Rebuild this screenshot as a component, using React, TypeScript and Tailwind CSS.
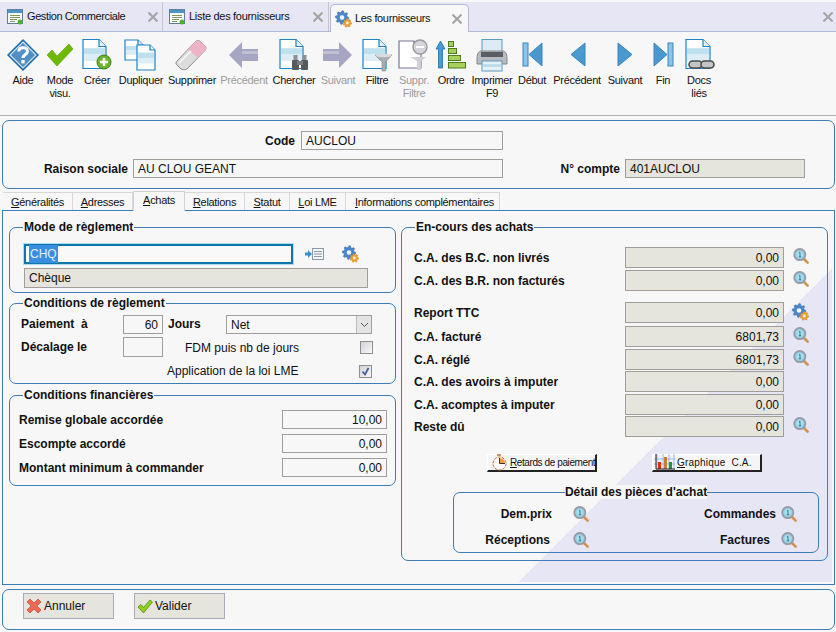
import React from "react";

function gearPath(cx: number, cy: number, r: number, teeth: number) {
  const pts: string[] = [];
  const n = teeth * 4;
  for (let i = 0; i < n; i++) {
    const a = (i / n) * Math.PI * 2;
    const rr = i % 4 < 2 ? r : r * 0.74;
    pts.push(`${(cx + rr * Math.cos(a)).toFixed(2)},${(cy + rr * Math.sin(a)).toFixed(2)}`);
  }
  return "M" + pts.join("L") + "Z";
}

function Gear({ className = "" }: { className?: string }) {
  return (
    <svg viewBox="0 0 17 18" width="17" height="18" className={className}>
      <path d={gearPath(7, 7.5, 6.8, 8)} fill="#4a88cc" stroke="#2f639c" strokeWidth="0.5" />
      <circle cx="7" cy="7.5" r="2.3" fill="#f4f8fc" />
      <path d={gearPath(12.3, 13, 4.4, 7)} fill="#f0a030" stroke="#b8701c" strokeWidth="0.4" />
      <circle cx="12.3" cy="13" r="1.4" fill="#fff2d8" />
    </svg>
  );
}

function Loupe({ className = "" }: { className?: string }) {
  return (
    <svg viewBox="0 0 16 16" width="16" height="16" className={className}>
      <path d="M10.5 10.5L12 12" stroke="#85858e" strokeWidth="2.4" />
      <path d="M12 12L14.6 14.6" stroke="#d8904a" strokeWidth="2.6" strokeLinecap="round" />
      <circle cx="6.8" cy="6.6" r="5.6" fill="#8ecfe6" stroke="#9a9aa4" strokeWidth="1.8" />
      <circle cx="6.8" cy="6.6" r="3.4" fill="#a9def0" />
      <path d="M6 5L7 4.4V8.8M5.8 8.8H8.2" stroke="#23606f" strokeWidth="0.8" fill="none" />
    </svg>
  );
}

function Doc({ x, y, w, h, stroke = "#1c83c6" }: { x: number; y: number; w: number; h: number; stroke?: string }) {
  const f = Math.round(w * 0.3);
  const band = y + h * 0.3;
  return (
    <g>
      <path d={`M${x} ${y}H${x + w - f}L${x + w} ${y + f}V${y + h}H${x}Z`} fill="#fff" stroke={stroke} strokeWidth="1.2" />
      <rect x={x + 1} y={band} width={w - 2} height={h * 0.22} fill="#bfe0ef" />
      <rect x={x + 1} y={band + h * 0.22} width={w - 2} height={h * 0.22} fill="#dcedf6" />
      <path d={`M${x + w - f} ${y}V${y + f}H${x + w}`} fill="#e8f3f9" stroke={stroke} strokeWidth="1.2" />
    </g>
  );
}

function ListDoc({ className = "" }: { className?: string }) {
  return (
    <svg viewBox="0 0 16 16" width="16" height="16" className={className}>
      <rect x="0.5" y="0.5" width="15" height="14" fill="#fff" stroke="#5b7f9c" />
      <rect x="1" y="1" width="14" height="3" fill="#4d94c8" />
      <path d="M3 6.5H13M3 8.5H13M3 10.5H10M3 12.5H8" stroke="#7d9a5c" />
      <circle cx="13" cy="13" r="2.5" fill="#4fae2c" />
    </svg>
  );
}

function CloseX({ className = "" }: { className?: string }) {
  return (
    <svg viewBox="0 0 10 10" width="10" height="10" className={`shrink-0 ${className}`}>
      <path d="M0.5 0.5L9.5 9.5M9.5 0.5L0.5 9.5" stroke="#a4a4a4" strokeWidth="2" />
    </svg>
  );
}

const IconBox = ({ children }: { children: React.ReactNode }) => (
  <svg viewBox="0 0 36 34" width="36" height="34" className="shrink-0">
    {children}
  </svg>
);

const icons: Record<string, React.ReactNode> = {
  aide: (
    <IconBox>
      <path d="M18 1L34 17L18 33L2 17Z" fill="#1d6aa6" />
      <path d="M18 4L31 17L18 30L5 17Z" fill="#4f8fc6" stroke="#d5e7f4" strokeWidth="1.2" />
      <path d="M13.8 13.5C14 8.5 22.5 8.5 22.5 13.2C22.5 16.5 18 16.5 18 20" fill="none" stroke="#fff" strokeWidth="3" />
      <rect x="16.3" y="22" width="3.4" height="3.4" fill="#fff" />
    </IconBox>
  ),
  check: (
    <IconBox>
      <path d="M5 17L10 12L15 18L27 6L31 11L15 28Z" fill="#6db800" stroke="#5b9c00" strokeWidth="0.6" />
    </IconBox>
  ),
  creer: (
    <IconBox>
      <Doc x={4} y={1.5} w={23} h={29} />
      <circle cx="25" cy="24" r="7" fill="#6fb52c" stroke="#3d7d1a" />
      <path d="M25 20V28M21 24H29" stroke="#fff" strokeWidth="2.4" />
    </IconBox>
  ),
  dup: (
    <IconBox>
      <Doc x={2} y={2} w={18} h={20} />
      <Doc x={14} y={7} w={18} h={25} />
    </IconBox>
  ),
  eraser: (
    <IconBox>
      <g transform="translate(-2 0)">
        <path d="M5 23L23 4C25 2 27 2 29 4L33 8C34.5 10 34 11 33 12.5L15 31C13 32 11 32 9 31L5 27C3.6 25.5 3.6 24.5 5 23Z" fill="#dcdcdc" stroke="#8f8f8f" />
        <path d="M16 11.5L23 4C25 2 27 2 29 4L33 8C34.5 10 34 11 33 12.5L26 20Z" fill="#eeb4c6" />
        <path d="M7 25L19 13" stroke="#fff" strokeWidth="1.2" />
      </g>
    </IconBox>
  ),
  left: (
    <IconBox>
      <path d="M3 17L16 4V11H32V23H16V30Z" fill="#a7a6c2" />
      <path d="M16 13H32V16H16Z" fill="#c0bfd4" />
    </IconBox>
  ),
  right: (
    <IconBox>
      <path d="M32 17L19 4V11H3V23H19V30Z" fill="#a7a6c2" />
      <path d="M3 13H19V16H3Z" fill="#c0bfd4" />
    </IconBox>
  ),
  chercher: (
    <IconBox>
      <Doc x={4} y={1.5} w={23} h={29} />
      <rect x="16" y="22" width="7" height="10" rx="1" fill="#55585c" />
      <rect x="25" y="22" width="7" height="10" rx="1" fill="#55585c" />
      <rect x="21" y="23" width="6" height="4" fill="#7a7d82" />
      <rect x="17.5" y="17" width="4" height="5" fill="#8b8e92" />
      <rect x="26.5" y="17" width="4" height="5" fill="#8b8e92" />
    </IconBox>
  ),
  filtre: (
    <IconBox>
      <Doc x={4} y={1.5} w={23} h={29} />
      <path d="M16 17H33L26.5 24V33H23V24Z" fill="#a9acb0" stroke="#84878b" strokeWidth="0.6" />
      <ellipse cx="24.5" cy="17.5" rx="8" ry="1.8" fill="#d9dbde" />
    </IconBox>
  ),
  sfiltre: (
    <IconBox>
      <Doc x={3} y={3} w={22} h={27} stroke="#78769a" />
      <rect x="4" y="11" width="20" height="13" fill="#fff" />
      <path d="M14 19H30L25 23V32H21V23Z" fill="#cfd0d4" />
      <circle cx="24" cy="9" r="7" fill="#d4d4dc" stroke="#98989c" strokeWidth="1.4" />
      <path d="M20 9H28" stroke="#fff" strokeWidth="2" />
    </IconBox>
  ),
  ordre: (
    <IconBox>
      <path d="M5.5 30V11H3L7.5 3L12 11H9.5V30Z" fill="#4a9ad4" stroke="#1e6ea8" strokeWidth="0.8" />
      <g fill="#a9cf5b" stroke="#4f7c22" strokeWidth="1">
        <rect x="15.5" y="3.5" width="5" height="5" />
        <rect x="15.5" y="10.5" width="8" height="5" />
        <rect x="15.5" y="17.5" width="12" height="5" />
        <rect x="15.5" y="24.5" width="17" height="5.5" />
      </g>
    </IconBox>
  ),
  print: (
    <IconBox>
      <rect x="8" y="1.5" width="20" height="12" fill="#dcebf4" stroke="#5d98bf" />
      <path d="M3 21C3 14 5 13 9 13H27C31 13 33 14 33 21V26H3Z" fill="#b8bcc0" stroke="#83878c" />
      <rect x="7" y="14" width="22" height="5" fill="#5a5e64" />
      <rect x="8" y="23" width="20" height="10" fill="#e6f1f7" stroke="#5d98bf" />
      <rect x="9" y="26" width="18" height="3" fill="#bddcec" />
    </IconBox>
  ),
  debut: (
    <IconBox>
      <rect x="9" y="5" width="5" height="23" fill="#8ac4e6" stroke="#3a86bf" />
      <path d="M28 5V28L15 16.5Z" fill="#4a98d0" stroke="#3a86bf" />
    </IconBox>
  ),
  prec: (
    <IconBox>
      <path d="M26 5V28L12 16.5Z" fill="#4a98d0" stroke="#3a86bf" />
    </IconBox>
  ),
  suiv: (
    <IconBox>
      <path d="M11 5V28L25 16.5Z" fill="#4a98d0" stroke="#3a86bf" />
    </IconBox>
  ),
  fin: (
    <IconBox>
      <path d="M9 5V28L22 16.5Z" fill="#4a98d0" stroke="#3a86bf" />
      <rect x="23" y="5" width="5" height="23" fill="#8ac4e6" stroke="#3a86bf" />
    </IconBox>
  ),
  docs: (
    <IconBox>
      <Doc x={5} y={1.5} w={24} h={29} />
      <g fill="#c4c4c4" stroke="#4e4e4e" strokeWidth="1.6">
        <rect x="8" y="23" width="13" height="7" rx="3.5" />
        <rect x="20" y="23" width="13" height="7" rx="3.5" />
      </g>
    </IconBox>
  ),
};

const tools: { w: string; icon: string; label: React.ReactNode; off?: boolean }[] = [
  { w: "w-[36px]", icon: "aide", label: "Aide" },
  { w: "w-[38px]", icon: "check", label: <>Mode<br />visu.</> },
  { w: "w-[36px]", icon: "creer", label: "Créer" },
  { w: "w-[52px]", icon: "dup", label: "Dupliquer" },
  { w: "w-[50px]", icon: "eraser", label: "Supprimer" },
  { w: "w-[54px]", icon: "left", label: "Précédent", off: true },
  { w: "w-[46px]", icon: "chercher", label: "Chercher" },
  { w: "w-[42px]", icon: "right", label: "Suivant", off: true },
  { w: "w-[36px]", icon: "filtre", label: "Filtre" },
  { w: "w-[38px]", icon: "sfiltre", label: <>Suppr.<br />Filtre</>, off: true },
  { w: "w-[36px]", icon: "ordre", label: "Ordre" },
  { w: "w-[46px]", icon: "print", label: <>Imprimer<br />F9</> },
  { w: "w-[34px]", icon: "debut", label: "Début" },
  { w: "w-[56px]", icon: "prec", label: "Précédent" },
  { w: "w-[40px]", icon: "suiv", label: "Suivant" },
  { w: "w-[36px]", icon: "fin", label: "Fin" },
  { w: "w-[36px]", icon: "docs", label: <>Docs<br />liés</> },
];

const fieldBase = "flex items-center border border-[#a19e99] text-[12px] text-[#111] shrink-0";
const grey = "bg-[#e6e5dd]";
const legendCls = "ml-[13px] px-[1px] h-[14px] leading-[14px] text-[12px] font-bold text-[#111]";
const fsCls = "border border-[#3c7db5] rounded-[7px] min-w-0";
const labelCls = "text-[12px] font-bold text-[#111] shrink-0";

const encours: { label: string; value: string; mt: string; icon?: "loupe" | "gear" }[] = [
  { label: "C.A. des B.C. non livrés", value: "0,00", mt: "mt-[13px]", icon: "loupe" },
  { label: "C.A. des B.R. non facturés", value: "0,00", mt: "mt-[2px]", icon: "loupe" },
  { label: "Report TTC", value: "0,00", mt: "mt-[11px]", icon: "gear" },
  { label: "C.A. facturé", value: "6801,73", mt: "mt-[3px]", icon: "loupe" },
  { label: "C.A. réglé", value: "6801,73", mt: "mt-[2px]", icon: "loupe" },
  { label: "C.A. des avoirs à imputer", value: "0,00", mt: "mt-[1px]" },
  { label: "C.A. acomptes à imputer", value: "0,00", mt: "mt-[2px]" },
  { label: "Reste dû", value: "0,00", mt: "mt-[1px]", icon: "loupe" },
];

const subTabs: { w: string; first: string; rest: string; active?: boolean }[] = [
  { w: "w-[70px]", first: "G", rest: "énéralités" },
  { w: "w-[60px]", first: "A", rest: "dresses" },
  { w: "w-[52px]", first: "A", rest: "chats", active: true },
  { w: "w-[60px]", first: "R", rest: "elations" },
  { w: "w-[45px]", first: "S", rest: "tatut" },
  { w: "w-[56px]", first: "L", rest: "oi LME" },
  { w: "w-[154px] pl-[4px]", first: "I", rest: "nformations complémentaires" },
];

function Check({ checked }: { checked?: boolean }) {
  return (
    <div className="w-[13px] h-[13px] border border-[#8e8f8f] bg-[linear-gradient(135deg,#d0d2d8,#f8f8f8)] flex items-center justify-center shrink-0">
      {checked && (
        <svg viewBox="0 0 11 11" width="11" height="11">
          <path d="M2.5 5.5L5 8.5L8.5 2" fill="none" stroke="#4a5f97" strokeWidth="1.8" />
        </svg>
      )}
    </div>
  );
}

export default function App() {
  return (
    <div className="w-[836px] h-[632px] overflow-hidden bg-[#f7f7f7] font-['Liberation_Sans',Arial,sans-serif] text-[#111]">
      {/* window tabs */}
      <div className="pt-[2px]">
        <div className="h-[30px] bg-[#e6e6f5] border-b border-[#b4b8d8] flex items-end pr-[3px]">
          <div className="w-[163px] h-[29px] flex items-center border-r border-[#c6c6d0] pl-[7px] shrink-0">
            <ListDoc />
            <span className="ml-[4px] text-[11px] tracking-[-0.4px]">Gestion Commerciale</span>
            <CloseX className="ml-auto mr-[4px]" />
          </div>
          <div className="w-[166px] h-[29px] flex items-center border-r border-[#c6c6d0] pl-[6px] shrink-0">
            <ListDoc />
            <span className="ml-[4px] text-[11px] tracking-[-0.3px]">Liste des fournisseurs</span>
            <CloseX className="ml-auto mr-[5px]" />
          </div>
          <div className="w-[139px] h-[28px] -mb-[1px] ml-[1px] flex items-center bg-[#f7f7f7] border border-b-0 border-[#b4b8d8] rounded-t-[5px] pl-[4px] shrink-0">
            <Gear />
            <span className="ml-[3px] text-[11px] tracking-[-0.35px]">Les fournisseurs</span>
            <CloseX className="ml-auto mr-[6px]" />
          </div>
          <CloseX className="ml-auto mb-[9px]" />
        </div>
      </div>

      {/* toolbar */}
      <div className="h-[84px] border-b border-[#b0b0b0] pl-[5px] pt-[6px] flex items-start">
        {tools.map((t, i) => (
          <div key={i} className={`${t.w} shrink-0 flex flex-col items-center`}>
            {icons[t.icon]}
            <div className={`mt-[2px] text-[11px] leading-[13px] text-center whitespace-nowrap tracking-[-0.3px] ${t.off ? "text-[#9b9b9b]" : "text-[#111]"}`}>
              {t.label}
            </div>
          </div>
        ))}
      </div>

      {/* header */}
      <div className="ml-[2px] mt-[4px] w-[833px] h-[69px] border border-[#3c7db5] rounded-[7px] pt-[10px]">
        <div className="flex items-center">
          <div className={`${labelCls} w-[292px] text-right`}>Code</div>
          <div className={`${fieldBase} ml-[6px] w-[202px] h-[19px] px-[4px]`}>AUCLOU</div>
        </div>
        <div className="flex items-center mt-[9px]">
          <div className={`${labelCls} w-[125px] text-right`}>Raison sociale</div>
          <div className={`${fieldBase} ml-[5px] w-[370px] h-[19px] px-[4px]`}>AU CLOU GEANT</div>
          <div className={`${labelCls} w-[117px] text-right`}>N° compte</div>
          <div className={`${fieldBase} ${grey} ml-[5px] w-[180px] h-[19px] px-[4px]`}>401AUCLOU</div>
        </div>
      </div>

      {/* sub tabs */}
      <div className="ml-[3px] mt-[1px] h-[20px] flex items-end">
        {subTabs.map((t, i) => (
          <div
            key={i}
            className={
              t.active
                ? `${t.w} h-[20px] -mb-[1px] relative z-10 bg-[#f7f7f7] border border-b-0 border-[#d2d2d2] text-[11px] tracking-[-0.3px] flex items-start justify-center shrink-0`
                : `${t.w} h-[18px] pt-[2px] border-t border-r border-[#d8d8d8] text-[11px] tracking-[-0.3px] flex items-center justify-center shrink-0`
            }
          >
            <span>
              <span className="underline">{t.first}</span>
              {t.rest}
            </span>
          </div>
        ))}
      </div>

      {/* tab panel */}
      <div className="ml-[2px] w-[833px] h-[375px] border border-[#3c7db5] p-[2px]">
        <div className="h-full bg-[linear-gradient(135deg,#f7f7f7_624px,#e6e6f5_624px)] pl-[4px] pt-[7px] flex items-start gap-[5px]">
          {/* left column */}
          <div className="w-[387px] shrink-0">
            <fieldset className={`${fsCls} h-[73px]`}>
              <legend className={legendCls}>Mode de règlement</legend>
              <div className="flex items-center mt-[10px] ml-[14px]">
                <div className="w-[269px] h-[20px] border-2 border-[#0f76a8] ring-1 ring-[#a9dcee] bg-[#f9f9f9] flex items-center pl-[3px] text-[12px] shrink-0">
                  <span className="bg-[#3a8ee2] text-[#e4f0fb] px-[1px]">CHQ</span>
                </div>
                <svg viewBox="0 0 19 12" width="19" height="12" className="ml-[12px] shrink-0">
                  <rect x="7.5" y="0.5" width="11" height="11" fill="#f4f6f8" stroke="#8a9aa8" />
                  <path d="M9 3.5H17M9 6H17M9 8.5H17" stroke="#8a9aa8" />
                  <path d="M0 4.5H3V2L7 6L3 10V7.5H0Z" fill="#3f8fd0" />
                </svg>
                <Gear className="ml-[18px]" />
              </div>
              <div className={`${fieldBase} ${grey} mt-[4px] ml-[14px] w-[344px] h-[20px] px-[4px]`}>Chèque</div>
            </fieldset>

            <fieldset className={`${fsCls} h-[88px] mt-[3px]`}>
              <legend className={legendCls}>Conditions de règlement</legend>
              <div className="flex items-center mt-[5px] ml-[11px]">
                <div className={`${labelCls} w-[102px] -mt-[2px]`}>Paiement&nbsp; à</div>
                <div className={`${fieldBase} w-[40px] h-[19px] justify-end pr-[4px]`}>60</div>
                <div className={`${labelCls} ml-[5px] w-[58px] -mt-[2px]`}>Jours</div>
                <div className={`${fieldBase} w-[146px] h-[19px] pl-[4px]`}>
                  <span>Net</span>
                  <div className="ml-auto w-[15px] h-full bg-[#e4e4e4] border-l border-[#b8b8b8] flex items-center justify-center">
                    <svg viewBox="0 0 9 6" width="9" height="6">
                      <path d="M1 1L4.5 4.5L8 1" fill="none" stroke="#555" />
                    </svg>
                  </div>
                </div>
              </div>
              <div className="flex items-center mt-[3px] ml-[11px]">
                <div className={`${labelCls} w-[102px]`}>Décalage le</div>
                <div className={`${fieldBase} w-[40px] h-[20px]`} />
                <div className="ml-[22px] w-[175px] mt-[2px] text-[12px] shrink-0">FDM puis nb de jours</div>
                <Check />
              </div>
              <div className="flex items-center mt-[5px] ml-[157px]">
                <div className="w-[192px] text-[12px] shrink-0">Application de la loi LME</div>
                <Check checked />
              </div>
            </fieldset>

            <fieldset className={`${fsCls} h-[98px] mt-[4px]`}>
              <legend className={legendCls}>Conditions financières</legend>
              {[
                ["Remise globale accordée", "10,00", "mt-[8px]"],
                ["Escompte accordé", "0,00", "mt-[5px]"],
                ["Montant minimum à commander", "0,00", "mt-[5px]"],
              ].map(([l, v, mt]) => (
                <div key={l} className={`flex items-center ${mt} ml-[9px]`}>
                  <div className={`${labelCls} w-[263px]`}>{l}</div>
                  <div className={`${fieldBase} w-[105px] h-[19px] justify-end pr-[4px]`}>{v}</div>
                </div>
              ))}
            </fieldset>
          </div>

          {/* right column */}
          <fieldset className={`${fsCls} w-[427px] h-[341px] shrink-0`}>
            <legend className={legendCls}>En-cours des achats</legend>
            {encours.map((r) => (
              <div key={r.label} className={`flex items-center ${r.mt} pl-[12px]`}>
                <div className={`${labelCls} w-[211px]`}>{r.label}</div>
                <div className={`${fieldBase} ${grey} w-[159px] h-[21px] justify-end pr-[4px]`}>{r.value}</div>
                {r.icon === "loupe" && <Loupe className="ml-[9px] -mt-[3px]" />}
                {r.icon === "gear" && <Gear className="ml-[8px] -mt-[1px]" />}
              </div>
            ))}

            <div className="flex mt-[17px] ml-[85px]">
              <div className="w-[110px] h-[18px] bg-[#f5f5f5] border-t border-l border-t-white border-l-white border-b-2 border-r-2 border-b-[#222] border-r-[#222] flex items-center pl-[3px] text-[10px] tracking-[-0.4px] shrink-0">
                <svg viewBox="0 0 17 17" width="17" height="17" className="shrink-0">
                  <path d="M6 1H10" stroke="#b8743a" strokeWidth="1.5" />
                  <circle cx="8.5" cy="9.5" r="6.5" fill="#fdfdfd" stroke="#b8743a" strokeDasharray="3 1" />
                  <path d="M8.5 9.5V4A5.5 5.5 0 0 1 14 9.5Z" fill="#f09a3c" />
                  <path d="M8.5 4V9.5H14" fill="none" stroke="#333" />
                </svg>
                <span className="ml-[2px] whitespace-nowrap"><span className="underline">R</span>etards de paiement</span>
              </div>
              <div className="ml-[55px] w-[110px] h-[18px] bg-[#f5f5f5] border-t border-l border-t-white border-l-white border-b-2 border-r-2 border-b-[#222] border-r-[#222] flex items-center pl-[1px] text-[10px] tracking-[0.2px] shrink-0">
                <svg viewBox="0 0 21 17" width="21" height="17" className="shrink-0">
                  <path d="M3 0V16M9 0V16M15 0V16M20 0V16M0 5H21M0 10H21" stroke="#7ea6f0" strokeWidth="0.8" />
                  <rect x="4" y="8" width="3" height="7" fill="#e03010" />
                  <rect x="10" y="3" width="3" height="12" fill="#c88030" />
                  <rect x="15" y="8" width="3" height="7" fill="#10a030" />
                  <path d="M2 0V15H21" fill="none" stroke="#222" />
                </svg>
                <span className="ml-[2px] whitespace-nowrap"><span className="underline">G</span>raphique&nbsp; C.A.</span>
              </div>
            </div>

            <fieldset className={`${fsCls} w-[366px] h-[68px] ml-[51px] mt-[13px]`}>
              <legend className="mx-auto bg-[#f7f7f7] px-0 h-[14px] leading-[14px] text-[12px] font-bold">Détail des pièces d'achat</legend>
              <div className="flex items-center mt-[6px]">
                <div className="w-[98px] text-right text-[12px] font-bold shrink-0">Dem.prix</div>
                <Loupe className="ml-[21px]" />
                <div className="w-[187px] text-right text-[12px] font-bold shrink-0">Commandes</div>
                <Loupe className="ml-[5px]" />
              </div>
              <div className="flex items-center mt-[8px]">
                <div className="w-[96px] text-right text-[12px] font-bold shrink-0">Réceptions</div>
                <Loupe className="ml-[23px]" />
                <div className="w-[181px] text-right text-[12px] font-bold shrink-0">Factures</div>
                <Loupe className="ml-[11px]" />
              </div>
            </fieldset>
          </fieldset>
        </div>
      </div>

      {/* footer */}
      <div className="ml-[2px] mt-[4px] w-[833px] h-[41px] border border-[#3c7db5] rounded-[7px] pl-[20px] pt-[3px] flex items-start">
        <div className="w-[91px] h-[26px] bg-[#e6e5dd] border border-[#a9aab8] flex items-center pl-[2px] text-[12px] shrink-0">
          <svg viewBox="0 0 16 16" width="16" height="16" className="shrink-0">
            <path d="M1 4L4 1L8 5L12 1L15 4L11 8L15 12L12 15L8 11L4 15L1 12L5 8Z" fill="#ef6a55" stroke="#c9503c" strokeWidth="0.8" />
          </svg>
          <span className="ml-[2px]">Annuler</span>
        </div>
        <div className="ml-[20px] w-[91px] h-[26px] bg-[#e6e5dd] border border-[#a9aab8] flex items-center pl-[2px] text-[12px] shrink-0">
          <svg viewBox="0 0 16 16" width="16" height="16" className="shrink-0">
            <path d="M1 9L4 6.5L6.5 9.5L13 2L15.5 4L6.5 15Z" fill="#8fd11c" stroke="#4f8a10" strokeWidth="0.8" />
          </svg>
          <span className="ml-[2px]">Valider</span>
        </div>
      </div>
    </div>
  );
}
